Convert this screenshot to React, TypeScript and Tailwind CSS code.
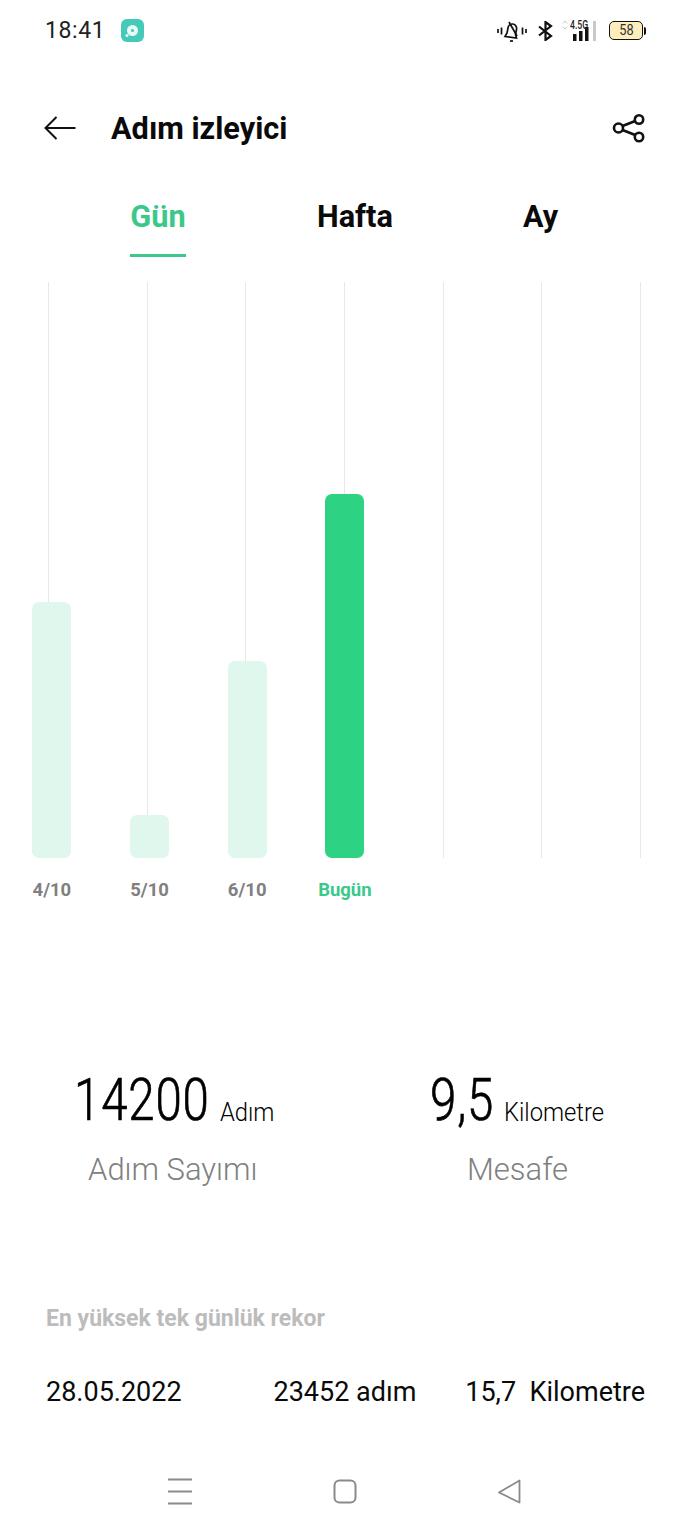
const lines = [0, 1, 2, 3, 4, 5, 6];

const bars = [
  { label: "4/10", height: "h-[256px]", color: "bg-[#dff7ec]", text: "text-[#808080]" },
  { label: "5/10", height: "h-[43px]", color: "bg-[#dff7ec]", text: "text-[#808080]" },
  { label: "6/10", height: "h-[197px]", color: "bg-[#dff7ec]", text: "text-[#808080]" },
  { label: "Bugün", height: "h-[364px]", color: "bg-[#2dd283]", text: "text-[#3ac98a]" },
];

function StatusBar() {
  return (
    <div className="flex h-[61px] items-center justify-between pl-[45px] pr-[44px]">
      <div className="flex items-center gap-[16px]">
        <span className="text-[23px] leading-none tracking-[0.6px] text-[#222]">18:41</span>
        <svg width="23" height="23" viewBox="0 0 23 23">
          <rect width="23" height="23" rx="6" fill="#45c9b8" />
          <circle cx="11.5" cy="11.5" r="5.5" fill="#e9f9f6" />
          <circle cx="11.5" cy="11.5" r="1.6" fill="#45c9b8" />
          <circle cx="6" cy="16.5" r="1.5" fill="#e9f9f6" />
        </svg>
      </div>
      <div className="flex items-center">
        <svg width="30" height="26" viewBox="0 0 30 26" fill="none" stroke="#111" strokeWidth="1.7">
          <path d="M1 11v4M4.5 9.5v7M25.5 9.5v7M29 11v4" />
          <path d="M8 18.5l11.5 1.5-1-3.5 1-5a4.6 4.6 0 0 0-3.5-5.5 4.6 4.6 0 0 0-5 4l-1 5z" />
          <path d="M12 4l8 14" />
          <path d="M13 23h3" />
        </svg>
        <svg className="ml-[11px]" width="15" height="20" viewBox="0 0 15 20" fill="none" stroke="#111" strokeWidth="2.2">
          <path d="M1 5.5l12 9.5-5.5 4V1L13 5 1 14.5" />
        </svg>
        <div className="ml-[9px] flex h-[21px] w-[37px] flex-col items-start">
          <div className="flex items-center">
            <svg width="6" height="10" viewBox="0 0 6 10" fill="none" stroke="#c8c8c8" strokeWidth="1">
              <path d="M0.8 3.5L3 1l2.2 2.5M0.8 6.5L3 9l2.2-2.5" />
            </svg>
            <span className="ml-[2px] origin-left scale-x-[0.72] text-[12px] leading-[10px] font-medium whitespace-nowrap text-[#222]">
              4.5G
            </span>
          </div>
        </div>
        <svg className="-ml-[26px]" width="26" height="20" viewBox="0 0 26 20">
          <rect x="0" y="13" width="3.5" height="7" fill="#111" />
          <rect x="6" y="10" width="3.5" height="10" fill="#111" />
          <rect x="12" y="6" width="3.5" height="14" fill="#111" />
          <rect x="20" y="0" width="3" height="20" fill="#c9c9c9" />
        </svg>
        <div className="ml-[10px] flex h-[19px] w-[34px] items-center justify-center rounded-[5px] border-[1.5px] border-[#111] bg-[#fbeebc]">
          <span className="scale-x-[0.85] text-[15px] leading-none text-[#333]">58</span>
        </div>
        <div className="ml-[1px] h-[8px] w-[2px] rounded-r-sm bg-[#111]" />
      </div>
    </div>
  );
}

function Header() {
  return (
    <div className="mt-[42px] flex h-[50px] items-center justify-between pl-[44px] pr-[44px]">
      <div className="flex items-center gap-[35px]">
        <svg width="32" height="26" viewBox="0 0 32 26" fill="none" stroke="#111" strokeWidth="2">
          <path d="M31.5 13H1.5M12.5 2L1.5 13l11 11" />
        </svg>
        <h1 className="pt-[2px] text-[30.7px] leading-none font-bold text-[#0a0a0a]">Adım izleyici</h1>
      </div>
      <svg width="34" height="30" viewBox="0 0 34 30" fill="none" stroke="#111" strokeWidth="2.6">
        <circle cx="6.5" cy="15" r="4.5" />
        <circle cx="27" cy="6.5" r="4.2" />
        <circle cx="27" cy="24" r="4.2" />
        <path d="M10.5 13l12.7-5M10.5 17l12.7 5" />
      </svg>
    </div>
  );
}

function Tabs() {
  return (
    <div className="mt-[43px] flex h-[74px] items-start pl-[130px]">
      <div className="flex w-[56px] flex-col items-center">
        <span className="h-[58px] pt-[3px] text-[30.7px] leading-[36px] font-bold whitespace-nowrap text-[#3ac98a]">Gün</span>
        <div className="h-[3px] w-[56px] bg-[#3ac98a]" />
      </div>
      <span className="ml-[131px] pt-[3px] text-[30.7px] leading-[36px] font-bold text-[#0a0a0a]">Hafta</span>
      <span className="ml-[130px] pt-[3px] text-[30.5px] leading-[36px] font-bold text-[#0a0a0a]">Ay</span>
    </div>
  );
}

function Chart() {
  return (
    <div className="mt-[12px]">
      <div className="grid h-[576px]">
        <div className="col-start-1 row-start-1 flex justify-between pl-[48px] pr-[49px]">
          {lines.map((l) => (
            <div key={l} className="h-full w-px bg-[#e8e8e8]" />
          ))}
        </div>
        <div className="col-start-1 row-start-1 flex items-end gap-[58.67px] pl-[32.4px]">
          {bars.map((b) => (
            <div key={b.label} className={`w-[39px] rounded-[7px] ${b.height} ${b.color}`} />
          ))}
        </div>
      </div>
      <div className="mt-[21px] flex gap-[58.67px] pl-[32.4px]">
        {bars.map((b) => (
          <div key={b.label} className="flex w-[39px] justify-center">
            <span className={`text-[18.5px] leading-[22px] font-bold whitespace-nowrap ${b.text}`}>{b.label}</span>
          </div>
        ))}
      </div>
    </div>
  );
}

function Stats() {
  return (
    <div className="mt-[166px] flex">
      <div className="w-[345px]">
        <div className="flex h-[66px] items-end pl-[74px]">
          <span className="inline-block w-[146px] origin-left scale-x-[0.81] text-[58.6px] leading-[66px] font-light tracking-[1px] text-black [-webkit-text-stroke:0.7px_#000]">
            14200
          </span>
          <span className="mb-[6px] inline-block origin-left scale-x-[0.95] text-[25px] leading-[28px] font-light text-black">
            Adım
          </span>
        </div>
        <p className="mt-[19px] pl-[88px] text-[31px] leading-[36px] font-light text-[#808080]">Adım Sayımı</p>
      </div>
      <div className="w-[345px]">
        <div className="flex h-[66px] items-end pl-[85px]">
          <span className="inline-block w-[74px] origin-left scale-x-[0.81] text-[58.6px] leading-[66px] font-light tracking-[1px] text-black [-webkit-text-stroke:0.7px_#000]">
            9,5
          </span>
          <span className="mb-[6px] inline-block origin-left scale-x-[0.95] text-[25px] leading-[28px] font-light text-black">
            Kilometre
          </span>
        </div>
        <p className="mt-[19px] pl-[122px] text-[31px] leading-[36px] font-light text-[#808080]">Mesafe</p>
      </div>
    </div>
  );
}

function Record() {
  return (
    <div className="mt-[118px] pl-[46px] pr-[45px]">
      <p className="text-[23px] leading-[26px] font-bold text-[#bcbcbc]">En yüksek tek günlük rekor</p>
      <div className="mt-[44px] flex justify-between text-[27px] leading-[32px] text-[#0a0a0a]">
        <span>28.05.2022</span>
        <span className="ml-[43px]">23452 adım</span>
        <span className="whitespace-pre">15,7  Kilometre</span>
      </div>
    </div>
  );
}

function NavBar() {
  return (
    <div className="mt-[68px] flex h-[30px] items-center pl-[168px]">
      <svg width="24" height="27" viewBox="0 0 24 27" stroke="#8a8a8a" strokeWidth="2">
        <path d="M0 1.5h24M0 13.5h24M0 25.5h24" />
      </svg>
      <svg className="ml-[141px]" width="24" height="25" viewBox="0 0 24 25" fill="none" stroke="#8a8a8a" strokeWidth="2">
        <rect x="1.5" y="1.5" width="21" height="22" rx="5" />
      </svg>
      <svg className="ml-[140px]" width="24" height="25" viewBox="0 0 24 25" fill="none" stroke="#8a8a8a" strokeWidth="1.8">
        <path d="M22.5 1.5v22L2 13.5z" strokeLinejoin="round" />
      </svg>
    </div>
  );
}

export default function App() {
  return (
    <div className="h-[1533px] w-[690px] overflow-hidden bg-white font-['Roboto',sans-serif]">
      <StatusBar />
      <Header />
      <Tabs />
      <Chart />
      <Stats />
      <Record />
      <NavBar />
    </div>
  );
}
